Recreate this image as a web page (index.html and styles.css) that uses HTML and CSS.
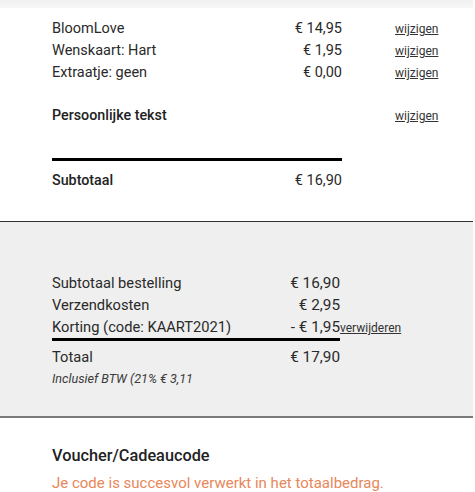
FILE: index.html
```html
<!DOCTYPE html>
<html lang="nl">
<head>
<meta charset="utf-8">
<link rel="stylesheet" href="styles.css">
</head>
<body>
<div class="page">
  <div class="topband"></div>
  <section class="items">
    <div class="row"><span class="label">BloomLove</span><span class="price">€ 14,95</span><a class="link" href="#">wijzigen</a></div>
    <div class="row"><span class="label">Wenskaart: Hart</span><span class="price">€ 1,95</span><a class="link" href="#">wijzigen</a></div>
    <div class="row"><span class="label">Extraatje: geen</span><span class="price">€ 0,00</span><a class="link" href="#">wijzigen</a></div>
    <div class="row spaced"><span class="label strong">Persoonlijke tekst</span><span class="price"></span><a class="link" href="#">wijzigen</a></div>
    <div class="bar"></div>
    <div class="row"><span class="label strong">Subtotaal</span><span class="price">€ 16,90</span></div>
  </section>
  <section class="totals">
    <div class="row"><span class="label big">Subtotaal bestelling</span><span class="price2">€ 16,90</span></div>
    <div class="row"><span class="label big">Verzendkosten</span><span class="price2">€ 2,95</span></div>
    <div class="row"><span class="label big">Korting (code: KAART2021)</span><span class="price2">- € 1,95</span><a class="link tight" href="#">verwijderen</a></div>
    <div class="bar bar2"></div>
    <div class="row total"><span class="label big">Totaal</span><span class="price2">€ 17,90</span></div>
    <div class="vat">Inclusief BTW (21% € 3,11</div>
  </section>
  <section class="voucher">
    <h2 class="vtitle">Voucher/Cadeaucode</h2>
    <p class="success">Je code is succesvol verwerkt in het totaalbedrag.</p>
  </section>
</div>
</body>
</html>
```
FILE: styles.css
```css
html, body {
  margin: 0;
  padding: 0;
  background: #fff;
}
body {
  font-family: Roboto, "Liberation Sans", Arial, sans-serif;
  color: #2a2a2a;
  font-size: 14.5px;
}
.page {
  width: 473px;
  overflow: hidden;
}
.topband {
  height: 8px;
  background: linear-gradient(#f0f0f0, #f7f7f7);
}
.items {
  padding: 10px 0 30px 52px;
}
.row {
  display: flex;
  align-items: baseline;
  height: 22px;
  line-height: 22px;
}
.label {
  width: 220px;
}
.label.big {
  font-size: 14.7px;
}
.strong {
  font-weight: 500;
  color: #222;
  font-size: 14.3px;
}
.price {
  width: 70px;
  text-align: right;
}
.price2 {
  width: 68px;
  text-align: right;
  font-size: 15.3px;
}
.link {
  margin-left: 53px;
  font-size: 12px;
  color: #333;
  text-decoration: underline;
}
.link.tight {
  margin-left: 0;
}
.spaced {
  margin-top: 20px;
}
.bar {
  width: 290px;
  height: 3px;
  background: #000;
  margin: 32px 0 8px;
}
.totals {
  background: #efefef;
  border-top: 1px solid #333;
  border-bottom: 2px solid #7a7a7a;
  padding: 50px 0 26px 52px;
}
.bar2 {
  width: 288px;
  margin: 0 0 5px;
}
.vat {
  font-size: 12.6px;
  font-style: italic;
  line-height: 22px;
  color: #3a3a3a;
}
.voucher {
  padding: 26px 0 0 52px;
}
.vtitle {
  margin: 0;
  font-size: 16.3px;
  font-weight: 500;
  line-height: 24px;
  color: #222;
}
.success {
  margin: 4px 0 0;
  color: #e8875a;
  font-size: 15px;
  line-height: 22px;
}
```
